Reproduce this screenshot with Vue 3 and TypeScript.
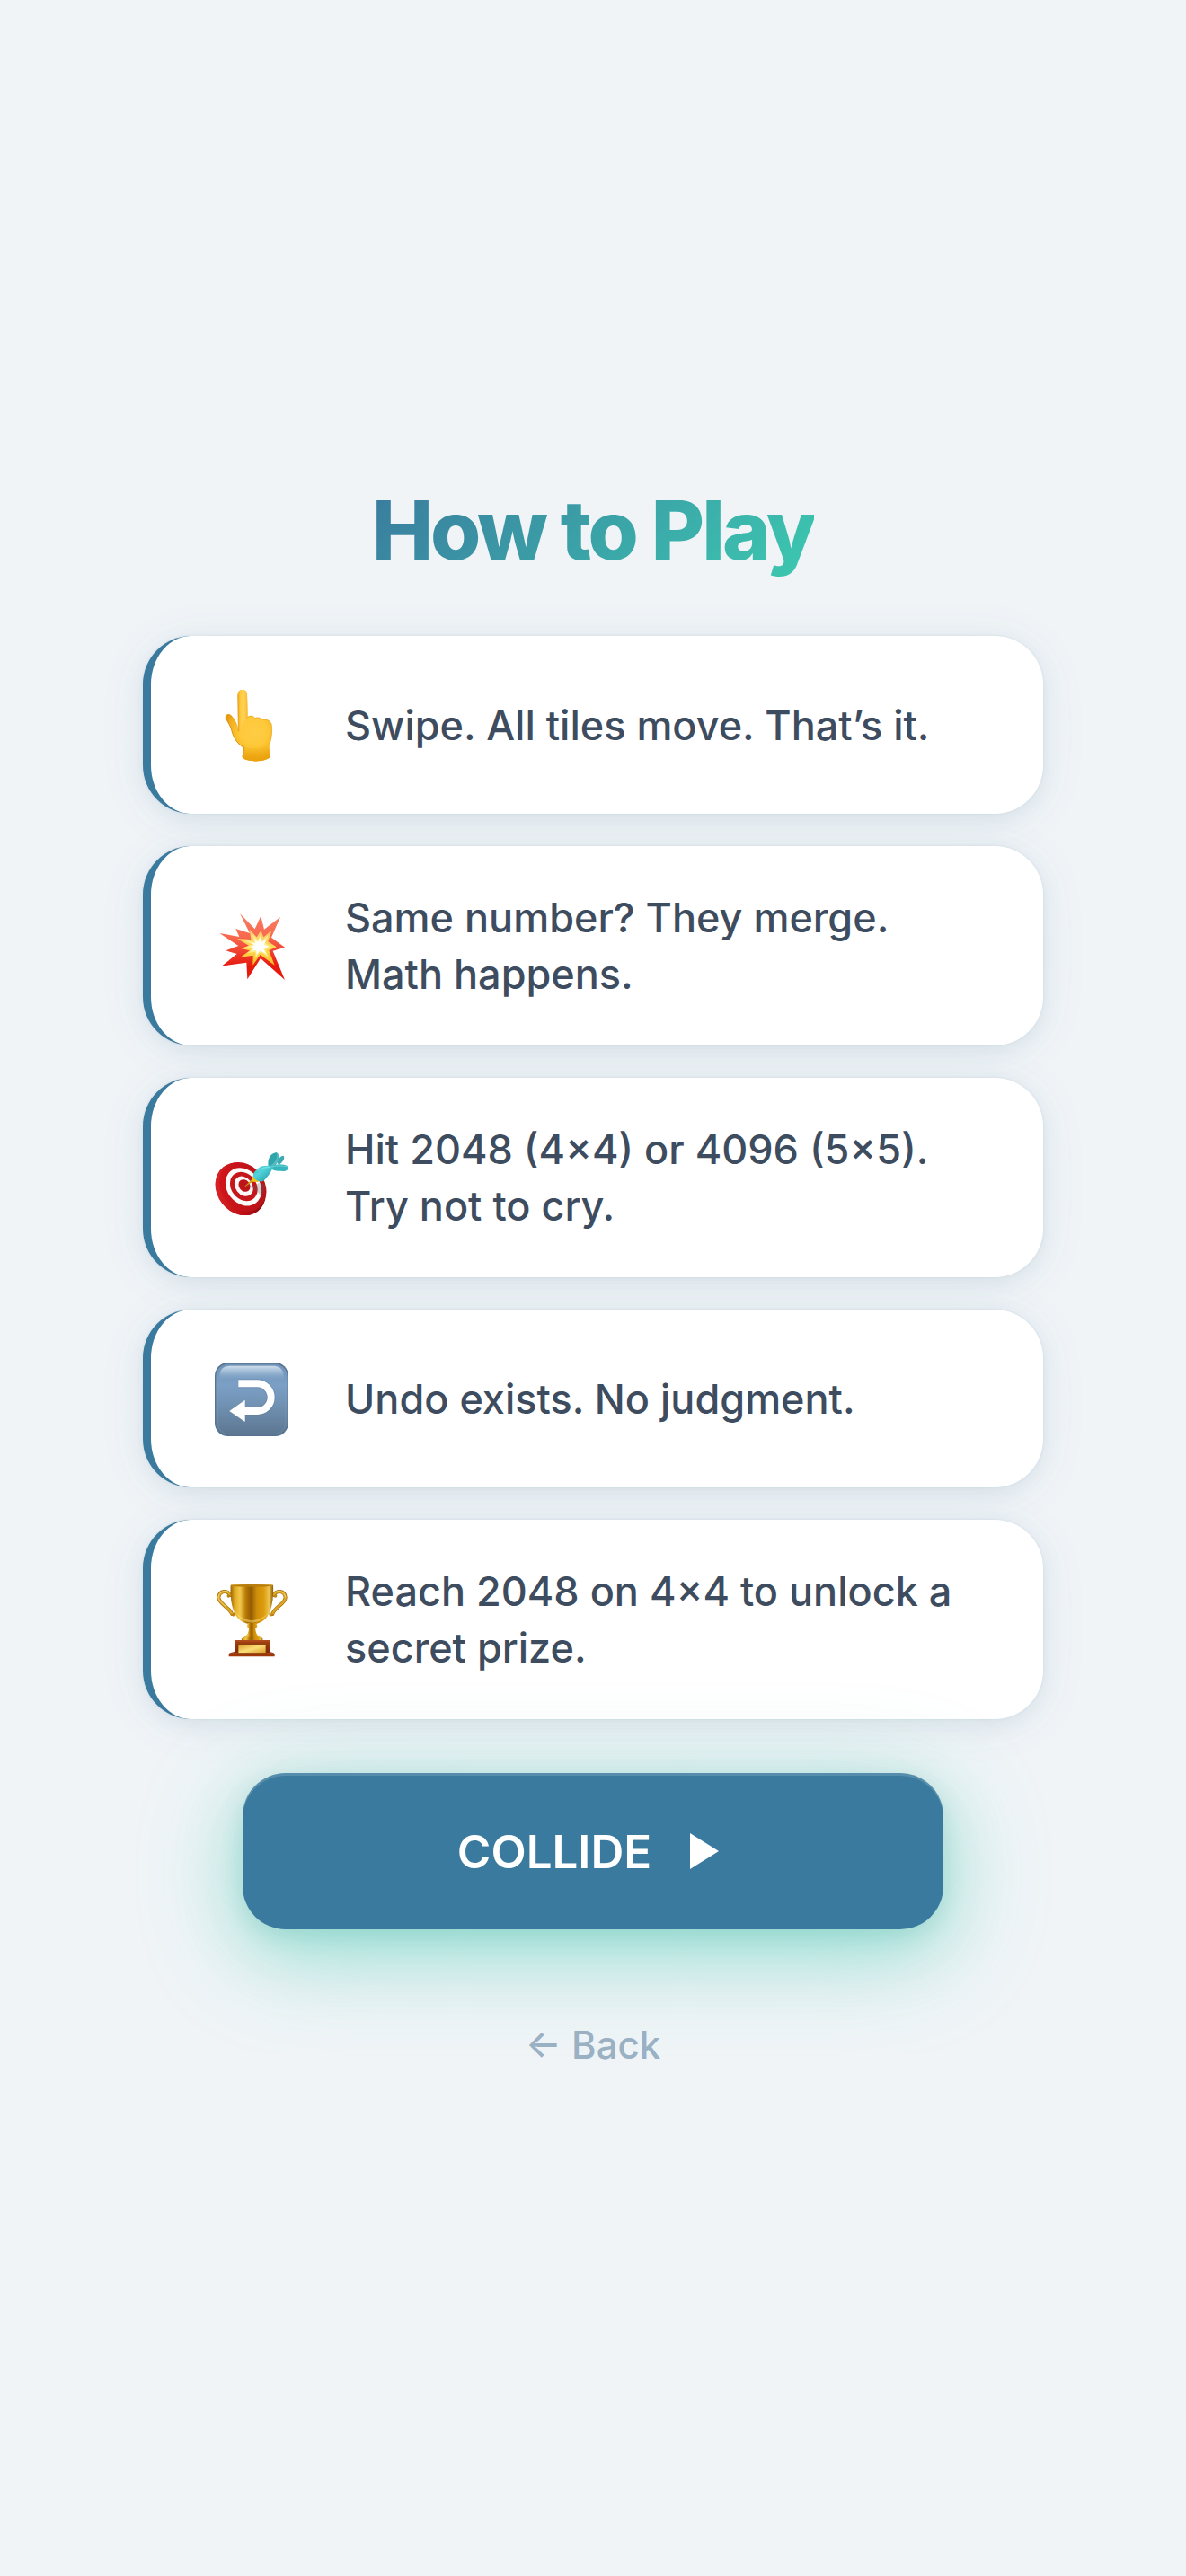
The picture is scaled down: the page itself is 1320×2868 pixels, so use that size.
<script setup lang="ts">
type IconName = 'point' | 'burst' | 'target' | 'undo' | 'trophy'

interface Rule {
  icon: IconName
  text: string
}

const rules: Rule[] = [
  { icon: 'point', text: 'Swipe. All tiles move. That’s it.' },
  { icon: 'burst', text: 'Same number? They merge. Math happens.' },
  { icon: 'target', text: 'Hit 2048 (4×4) or 4096 (5×5). Try not to cry.' },
  { icon: 'undo', text: 'Undo exists. No judgment.' },
  { icon: 'trophy', text: 'Reach 2048 on 4×4 to unlock a secret prize.' },
]
</script>

<template>
  <main class="screen">
    <h1 class="title">How to Play</h1>

    <ul class="rules">
      <li v-for="rule in rules" :key="rule.icon" class="rule">
        <span class="rule-icon" aria-hidden="true">
          <svg v-if="rule.icon === 'point'" viewBox="51 45 252 252">
            <defs>
              <radialGradient id="skin" gradientUnits="userSpaceOnUse" cx="188" cy="195" r="100">
                <stop offset="0" stop-color="#ffd25a" />
                <stop offset="0.5" stop-color="#fdc734" />
                <stop offset="0.85" stop-color="#f3ae1b" />
                <stop offset="1" stop-color="#e59c10" />
              </radialGradient>
              <linearGradient id="finger" x1="0" x2="1" y1="0" y2="0">
                <stop offset="0" stop-color="#f0ab1c" />
                <stop offset="0.3" stop-color="#ffcd45" />
                <stop offset="0.65" stop-color="#ffd052" />
                <stop offset="1" stop-color="#f7ba2c" />
              </linearGradient>
              <linearGradient id="wrist" x1="0" x2="0" y1="0" y2="1">
                <stop offset="0" stop-color="#eda814" stop-opacity="0" />
                <stop offset="1" stop-color="#eaa20c" />
              </linearGradient>
            </defs>
            <path d="M134 70C134 49 165 49 165 70L167 146C175 138 187 141 191 149C200 144 212 148 217 155C229 150 241 157 246 168C250 188 247 216 240 236C238 247 240 262 243 277C232 297 160 297 149 279C151 268 153 259 153 248C132 236 119 214 113 190C108 172 99 160 93 150C88 138 103 129 113 140C124 151 131 168 135 188Z" fill="url(#skin)" />
            <path d="M134 70C134 49 165 49 165 70L167 152C158 162 145 178 138 204Z" fill="url(#finger)" />
            <path d="M138 200C140 176 155 156 167 146C175 138 187 141 191 149C200 144 212 148 217 155C235 170 235 220 200 232C160 238 139 220 138 200Z" fill="#fec93c" opacity="0.7" />
            <path d="M154 244C180 252 216 250 239 240L243 277C232 297 160 297 149 279Z" fill="url(#wrist)" />
            <path d="M94 150C102 162 110 176 114 192C120 216 134 236 155 246L150 278" fill="none" stroke="#d38212" stroke-width="3" opacity="0.75" />
            <path d="M111 141C124 152 132 168 136 192L134 72" fill="none" stroke="#d78d13" stroke-width="2" opacity="0.75" />
            <path d="M166 146C176 139 187 141 191 149C200 144 212 148 217 155C229 150 241 157 246 168C250 188 247 216 240 236" fill="none" stroke="#e29a13" stroke-width="2" />
          </svg>

          <svg v-else-if="rule.icon === 'burst'" viewBox="51 48 252 252">
            <defs>
              <linearGradient id="flame" x1="0" x2="0" y1="0" y2="1">
                <stop offset="0" stop-color="#f77f62" />
                <stop offset="0.35" stop-color="#f8694f" />
                <stop offset="0.6" stop-color="#ee3b2c" />
                <stop offset="0.8" stop-color="#e6190d" />
                <stop offset="1" stop-color="#e71b10" />
              </linearGradient>
              <linearGradient id="spark" x1="0" x2="0" y1="0" y2="1">
                <stop offset="0" stop-color="#fbc370" />
                <stop offset="0.5" stop-color="#fddb5a" />
                <stop offset="1" stop-color="#fbbd20" />
              </linearGradient>
              <radialGradient id="core">
                <stop offset="0" stop-color="#fff" />
                <stop offset="0.45" stop-color="#fffce8" />
                <stop offset="1" stop-color="#fff06e" stop-opacity="0" />
              </radialGradient>
            </defs>
            <path d="M141 66L191 118L211 74L222 119L276 78L246 146L291 179L251 191L291 288L210 216L166 286L163 230L80 242L131 201L94 190L136 174L73 132L139 144L127 117L174 132Z" fill="url(#flame)" />
            <path d="M173 119L197 145L211 123L220 145L247 123L235 160L263 178L238 190L257 239L209 204L184 239L185 206L143 212L174 190L144 183L171 173L132 150L178 153Z" fill="url(#spark)" />
            <path d="M182 134L200 154L210 137L216 155L235 139L226 166L245 177L226 187L236 212L208 193L193 216L193 195L166 198L185 184L162 178L185 170L152 155L188 160Z" fill="#fff29a" opacity="0.8" />
            <circle cx="205" cy="176" r="26" fill="url(#core)" />
            <path d="M188 150L201 163L210 145L213 163L229 152L221 170L237 177L220 184L228 201L208 189L197 205L196 188L177 191L190 180L176 177L191 172L178 164L195 166Z" fill="#fff" />
          </svg>

          <svg v-else-if="rule.icon === 'target'" viewBox="51 27 252 252">
            <defs>
              <linearGradient id="rim" x1="0" x2="1" y1="0" y2="1">
                <stop offset="0" stop-color="#e02a2a" />
                <stop offset="0.55" stop-color="#c01015" />
                <stop offset="1" stop-color="#5f090b" />
              </linearGradient>
              <linearGradient id="face" x1="0" x2="1" y1="0" y2="1">
                <stop offset="0" stop-color="#d7141b" />
                <stop offset="1" stop-color="#b01419" />
              </linearGradient>
              <linearGradient id="dart" x1="0" x2="1" y1="0" y2="1">
                <stop offset="0" stop-color="#3ebec6" />
                <stop offset="0.4" stop-color="#50d3da" />
                <stop offset="1" stop-color="#218f9a" />
              </linearGradient>
            </defs>
            <ellipse cx="143" cy="192" rx="78" ry="94" transform="rotate(-38 143 192)" fill="url(#rim)" />
            <ellipse cx="151" cy="184" rx="72" ry="88" transform="rotate(-38 151 184)" fill="url(#face)" />
            <ellipse cx="153" cy="184" rx="55" ry="68" transform="rotate(-38 153 184)" fill="#fbfbfa" />
            <ellipse cx="154" cy="183" rx="42" ry="52" transform="rotate(-38 154 183)" fill="#c5171b" />
            <ellipse cx="154" cy="182" rx="28" ry="36" transform="rotate(-38 154 182)" fill="#f9f8f6" />
            <ellipse cx="156" cy="180" rx="18" ry="22" transform="rotate(-38 156 180)" fill="#bd1519" />
            <path d="M163 181C178 178 190 184 203 172L225 176C225 194 218 208 212 219C204 203 190 190 163 181Z" fill="#5d6060" opacity="0.28" />
            <path d="M159 182L181 160L184 165Z" fill="#c99b10" stroke="#d2a314" stroke-width="2" />
            <path d="M181 149L192 151L205 165L200 168L180 167Z" fill="#f0c416" />
            <path d="M236 117C232 91 242 73 263 69C277 77 272 103 250 121Z" fill="#2fa5ad" />
            <path d="M263 71C268 85 261 101 242 114L251 119C270 102 275 81 263 71Z" fill="#56bcc2" />
            <path d="M265 104C270 88 277 80 286 80C293 86 286 100 272 110Z" fill="#3fa9b0" />
            <path d="M240 121C257 106 282 106 303 116C304 129 294 134 279 131C265 133 252 130 240 121Z" fill="#35b6be" />
            <path d="M243 118C262 112 281 113 302 117" fill="none" stroke="#6dcfd3" stroke-width="3" />
            <path d="M185 148C187 132 201 121 216 115C229 112 243 112 252 118C245 137 232 153 219 165C208 170 190 163 185 148Z" fill="url(#dart)" />
            <path d="M200 130C210 122 224 118 240 118" fill="none" stroke="#9ceff2" stroke-width="4" opacity="0.5" />
          </svg>

          <svg v-else-if="rule.icon === 'undo'" viewBox="51 45 252 252">
            <defs>
              <linearGradient id="key" x1="0" x2="0" y1="0" y2="1">
                <stop offset="0" stop-color="#6f94b8" />
                <stop offset="0.3" stop-color="#7b9fc5" />
                <stop offset="0.55" stop-color="#7293b5" />
                <stop offset="1" stop-color="#5c7690" />
              </linearGradient>
              <linearGradient id="gloss" x1="0" x2="0" y1="0" y2="1">
                <stop offset="0" stop-color="#cfdeeb" />
                <stop offset="0.45" stop-color="#a9c3dc" stop-opacity="0.7" />
                <stop offset="1" stop-color="#7b9fc5" stop-opacity="0" />
              </linearGradient>
            </defs>
            <rect x="57" y="51" width="246" height="246" rx="44" fill="#587390" />
            <rect x="61" y="56" width="238" height="237" rx="40" fill="url(#key)" />
            <rect x="67" y="61" width="226" height="229" rx="36" fill="none" stroke="#86a3c0" stroke-width="3" opacity="0.3" />
            <path d="M72 112C72 76 80 62 112 62H248C280 62 288 76 288 112Z" fill="url(#gloss)" />
            <path d="M135 121H199a46 46 0 0 1 0 92H156" fill="none" stroke="#5b7692" stroke-width="29" opacity="0.4" />
            <path d="M136 121H199a46 46 0 0 1 0 92H156" fill="none" stroke="#fff" stroke-width="24" />
            <path d="M106 213L158 176V249Z" fill="#fff" />
          </svg>

          <svg v-else viewBox="51 48 252 252">
            <defs>
              <linearGradient id="gold" x1="0" x2="1" y1="0" y2="0">
                <stop offset="0" stop-color="#9a6507" />
                <stop offset="0.1" stop-color="#e0a820" />
                <stop offset="0.22" stop-color="#f3c84a" />
                <stop offset="0.36" stop-color="#b87a06" />
                <stop offset="0.48" stop-color="#935b03" />
                <stop offset="0.62" stop-color="#d08f0a" />
                <stop offset="0.78" stop-color="#dc9c0e" />
                <stop offset="0.9" stop-color="#eec450" />
                <stop offset="1" stop-color="#8b5905" />
              </linearGradient>
              <linearGradient id="wood" x1="0" x2="0" y1="0" y2="1">
                <stop offset="0" stop-color="#a74311" />
                <stop offset="0.7" stop-color="#842a08" />
                <stop offset="1" stop-color="#a53b0b" />
              </linearGradient>
              <linearGradient id="plaque" x1="0" x2="1" y1="0" y2="1">
                <stop offset="0" stop-color="#d99b26" />
                <stop offset="0.5" stop-color="#fbdd77" />
                <stop offset="1" stop-color="#d99a24" />
              </linearGradient>
            </defs>
            <g fill="none" stroke-linecap="round">
              <path d="M108 93C102 76 72 76 70 101C71 122 107 134 114 156M255 93C260 76 291 76 293 101C292 122 256 134 250 156" stroke="#a36d08" stroke-width="12" />
              <path d="M108 92C102 76 72 77 70 101C71 122 107 134 114 156M255 92C260 76 291 77 293 101C292 122 256 134 250 156" stroke="#dda526" stroke-width="8" />
              <path d="M104 83C92 75 71 82 69 99C70 110 82 121 92 129M260 83C272 75 291 82 293 99" stroke="#f6d775" stroke-width="3" />
              <path d="M114 157C118 164 125 160 122 153M250 157C245 164 238 159 242 152M107 95C104 101 98 98 101 93M255 95C258 101 264 98 262 93" stroke="#bd8211" stroke-width="5" />
            </g>
            <path d="M110 60C145 54 218 54 252 60C254 100 249 143 229 169C216 185 197 190 181 192C164 189 145 183 133 168C113 142 108 101 110 60Z" fill="url(#gold)" />
            <path d="M119 129C123 158 147 183 181 185C217 183 239 157 245 126C240 156 218 174 181 177C149 175 126 157 119 129Z" fill="#ffe074" opacity="0.5" />
            <ellipse cx="181" cy="60" rx="71" ry="5" fill="#b67c0d" />
            <path d="M112 60C145 54 218 54 250 60" fill="none" stroke="#e8c155" stroke-width="2" />
            <path d="M167 186H196L199 198L193 204C193 219 199 228 209 235H155C165 226 171 217 171 204L164 198Z" fill="url(#gold)" />
            <path d="M146 239C153 229 165 233 181 233C198 233 211 228 218 239L214 248H149Z" fill="url(#gold)" />
            <path d="M126 243H240V281C241 284 257 283 257 291V298H104V291C104 283 123 284 124 281Z" fill="url(#wood)" />
            <path d="M126 246H240M107 287H254" stroke="#d4713c" stroke-width="3" opacity="0.4" />
            <rect x="135" y="257" width="93" height="30" fill="url(#plaque)" stroke="#7d3208" stroke-width="2" />
          </svg>
        </span>
        <p class="rule-text">{{ rule.text }}</p>
      </li>
    </ul>

    <button type="button" class="play">
      <span>COLLIDE</span>
      <svg class="play-icon" viewBox="0 0 54 40" aria-hidden="true">
        <path d="M11 0L43 20L11 40Z" fill="currentColor" />
      </svg>
    </button>

    <button type="button" class="back">← Back</button>
  </main>
</template>

<style>
body {
  margin: 0;
  background: #f0f4f7;
}
</style>

<style scoped>
.screen {
  box-sizing: border-box;
  min-height: 100vh;
  padding: 48px;
  display: flex;
  flex-direction: column;
  align-items: center;
  justify-content: center;
  font-family: Inter, 'Liberation Sans', sans-serif;
  font-weight: 500;
  color: #3d4c5e;
}

.title {
  margin: 0 0 64px;
  font-size: 91px;
  line-height: 108px;
  font-weight: 800;
  letter-spacing: -3px;
  color: transparent;
  background: linear-gradient(135deg, #3a7a9e, #3cc9b0);
  background-clip: text;
  -webkit-background-clip: text;
}

.rules {
  width: 100%;
  max-width: 1002px;
  margin: 0;
  padding: 0;
  display: flex;
  flex-direction: column;
  gap: 36px;
  list-style: none;
}

.rule {
  box-sizing: border-box;
  padding: 48px 60px 48px 48px;
  display: flex;
  align-items: center;
  gap: 42px;
  border-left: 9px solid #3a7a9e;
  border-radius: 54px;
  background: #fff;
  box-shadow:
    0 6px 24px rgba(58, 114, 146, 0.09),
    0 6px 60px rgba(58, 110, 140, 0.06),
    0 0 3px rgba(58, 122, 158, 0.12);
}

.rule-icon {
  flex: none;
  width: 126px;
  height: 102px;
  display: flex;
  align-items: center;
  justify-content: center;
}

.rule-icon svg {
  width: 84px;
  height: 84px;
}

.rule-text {
  flex: 1;
  margin: 0;
  font-size: 45px;
  line-height: 63px;
}

.play {
  width: 100%;
  max-width: 780px;
  min-height: 174px;
  margin: 60px 0 0;
  padding: 0;
  display: flex;
  align-items: center;
  justify-content: center;
  gap: 32px;
  border: 0;
  border-radius: 48px;
  background: #3a7a9e;
  color: #fff;
  font: inherit;
  font-size: 51px;
  font-weight: 600;
  box-shadow:
    0 24px 120px rgba(60, 201, 176, 0.3),
    0 24px 72px rgba(60, 201, 176, 0.32),
    0 6px 24px rgba(58, 122, 118, 0.16),
    inset 0 3px 0 rgba(255, 255, 255, 0.15);
}

.play-icon {
  width: 54px;
  height: 40px;
}

.back {
  margin: 74px 0 0;
  padding: 24px 48px;
  border: 0;
  background: none;
  color: #9ab0c3;
  font: inherit;
  font-size: 42px;
  line-height: 62px;
}
</style>
